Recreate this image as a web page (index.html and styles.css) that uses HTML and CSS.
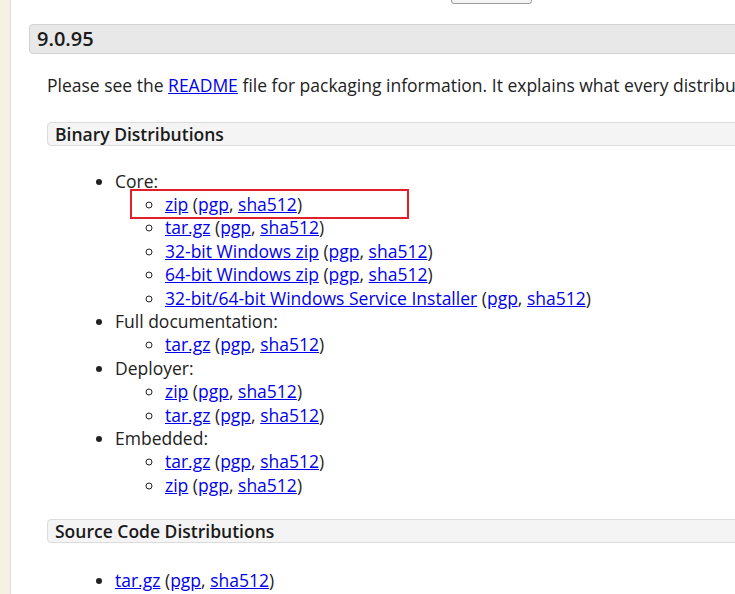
FILE: index.html
```html
<!DOCTYPE html>
<html lang="en">
<head>
<meta charset="utf-8">
<title>Apache Tomcat 9 Downloads</title>
<link rel="stylesheet" href="styles.css">
</head>
<body>
<div class="frame">
  <div class="edge"></div>
  <main class="content">
    <div class="topbar"><button class="btn" type="button"></button></div>
    <h3 class="release">9.0.95</h3>
    <div class="section">
      <p class="intro">Please see the <a href="#">README</a> file for packaging information. It explains what every distribution contains.</p>
      <h4 class="subhead first">Binary Distributions</h4>
      <ul class="dist">
        <li>Core:
          <ul class="sub">
            <li><a href="#">zip</a> (<a href="#">pgp</a>, <a href="#">sha512</a>)</li>
            <li><a href="#">tar.gz</a> (<a href="#">pgp</a>, <a href="#">sha512</a>)</li>
            <li><a href="#">32-bit Windows zip</a> (<a href="#">pgp</a>, <a href="#">sha512</a>)</li>
            <li><a href="#">64-bit Windows zip</a> (<a href="#">pgp</a>, <a href="#">sha512</a>)</li>
            <li><a href="#">32-bit/64-bit Windows Service Installer</a> (<a href="#">pgp</a>, <a href="#">sha512</a>)</li>
          </ul>
        </li>
        <li>Full documentation:
          <ul class="sub">
            <li><a href="#">tar.gz</a> (<a href="#">pgp</a>, <a href="#">sha512</a>)</li>
          </ul>
        </li>
        <li>Deployer:
          <ul class="sub">
            <li><a href="#">zip</a> (<a href="#">pgp</a>, <a href="#">sha512</a>)</li>
            <li><a href="#">tar.gz</a> (<a href="#">pgp</a>, <a href="#">sha512</a>)</li>
          </ul>
        </li>
        <li>Embedded:
          <ul class="sub">
            <li><a href="#">tar.gz</a> (<a href="#">pgp</a>, <a href="#">sha512</a>)</li>
            <li><a href="#">zip</a> (<a href="#">pgp</a>, <a href="#">sha512</a>)</li>
          </ul>
        </li>
      </ul>
      <h4 class="subhead">Source Code Distributions</h4>
      <ul class="dist source">
        <li><a href="#">tar.gz</a> (<a href="#">pgp</a>, <a href="#">sha512</a>)</li>
      </ul>
    </div>
  </main>
</div>
<div class="highlight"></div>
</body>
</html>
```
FILE: styles.css
```css
html, body {
  margin: 0;
  padding: 0;
  overflow: hidden;
  background: #ffffff;
}

body {
  font-family: "Open Sans", "Noto Sans", sans-serif;
  font-size: 17.5px;
  line-height: 23.4px;
  color: #222222;
  position: relative;
  height: 594px;
}

.frame {
  display: flex;
  align-items: stretch;
  min-height: 594px;
}

.edge {
  flex: none;
  width: 10px;
  background: #f6f1e4;
  border-right: 1px solid #e2ddd0;
}

.content {
  flex: none;
  width: 1100px;
  padding-left: 18px;
}

.topbar {
  height: 4px;
  display: flex;
  padding-left: 422px;
}

.btn {
  width: 81px;
  height: 20px;
  margin-top: -16px;
  border: 1px solid #9a9a9a;
  border-radius: 3px;
  background: #f4f4f4;
  padding: 0;
}

.release {
  margin: 20px 0 0 0;
  padding: 0 7px;
  font-size: 20px;
  line-height: 28px;
  font-weight: 600;
  color: #1a1a1a;
  background: #e8e8e8;
  border: 1px solid #d2d2d2;
  border-radius: 4px;
}

.section {
  padding-left: 18px;
}

.intro {
  margin: 20px 0 0 0;
  white-space: nowrap;
}

a {
  color: #0000ee;
  text-decoration: underline;
}

.subhead {
  margin: 22px 0 0 0;
  padding: 0 7px;
  font-size: 17.5px;
  line-height: 22px;
  font-weight: 600;
  color: #1a1a1a;
  background: #f4f4f4;
  border: 1px solid #dcdcdc;
  border-radius: 4px;
}

.subhead.first {
  margin-top: 24.5px;
}

.dist {
  margin: 23.7px 0 0 0;
  padding-left: 68px;
  list-style: disc;
}

.dist.source {
  margin-top: 26px;
}

.sub {
  margin: 0;
  padding-left: 50px;
  list-style: circle;
}

.highlight {
  position: absolute;
  left: 130px;
  top: 189px;
  width: 279px;
  height: 30px;
  box-sizing: border-box;
  border: 2px solid #e3202a;
  pointer-events: none;
}
```
